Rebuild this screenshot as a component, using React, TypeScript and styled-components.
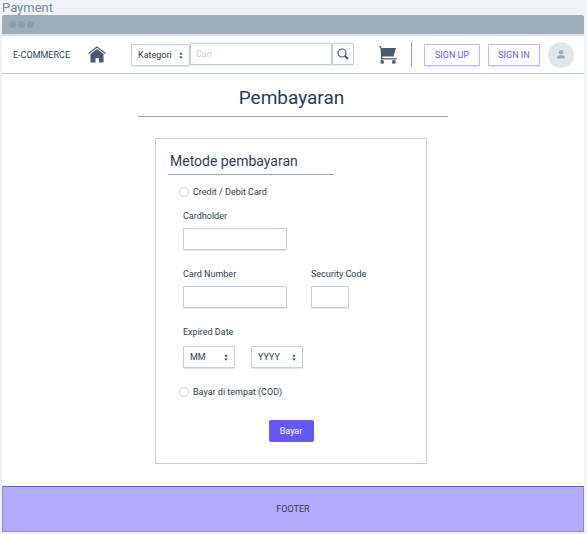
import React from "react";
import styled, { createGlobalStyle, css } from "styled-components";

const c = {
  ink: "#2c3e50",
  slate: "#475c6e",
  line: "#c1cdd8",
  rule: "#92a9bf",
  accent: "#6558f5",
};

const GlobalStyle = createGlobalStyle`
  *, *::before, *::after { box-sizing: border-box; }
  body { margin: 0; background: #eff3f6; }
  body, button, input, select {
    font-family: Roboto, "Liberation Sans", sans-serif;
    font-size: 9px;
    line-height: 12px;
    color: ${c.ink};
  }
`;

const Screen = styled.div`
  display: flex;
  flex-direction: column;
  min-height: 100vh;
  padding: 0 3px 2px 2px;
`;

const ScreenName = styled.div`
  height: 15px;
  font-size: 13px;
  line-height: 16px;
  color: #748b9e;
`;

const Browser = styled.div`
  flex: 1;
  display: flex;
  flex-direction: column;
  background: #fff;
  border-radius: 2px 2px 0 0;
`;

const TitleBar = styled.div`
  display: flex;
  align-items: center;
  gap: 2px;
  height: 21px;
  padding-left: 7px;
  background: #9eadb9;
  border-bottom: 2px solid #dae1e8;
  border-radius: 2px 2px 0 0;
`;

const Dot = styled.span`
  width: 7px;
  height: 7px;
  border-radius: 50%;
  background: #8d9dac;
`;

const Nav = styled.nav`
  display: flex;
  align-items: center;
  height: 38px;
  padding: 0 10px 0 11px;
  border-bottom: 1px solid ${c.line};
`;

const Brand = styled.a`
  color: ${c.ink};
  text-decoration: none;
  white-space: nowrap;
`;

const IconLink = styled.a`
  display: flex;
  color: ${c.slate};
`;

const HomeLink = styled(IconLink)`
  margin: 0 25px 0 18px;
`;

const CartLink = styled(IconLink)`
  margin: 0 14px 0 25px;
`;

const Search = styled.form`
  flex: 1;
  display: flex;
  min-width: 0;
`;

const fieldBox = css`
  height: 22px;
  background: #fff;
  border: 1px solid ${c.line};
  border-radius: 1px;
  box-shadow: 0 1px 0 #e6ebf0;
`;

const SelectBox = styled.span<{ $width: number; $drop?: boolean }>`
  display: grid;
  align-items: center;
  flex: none;
  width: ${(p) => p.$width}px;
  margin-top: ${(p) => (p.$drop ? "1px" : "0")};

  > * { grid-area: 1 / 1; }
  > svg { justify-self: end; margin-right: 7px; pointer-events: none; }
`;

const NativeSelect = styled.select`
  ${fieldBox}
  width: 100%;
  padding: 0 14px 0 6px;
  appearance: none;
`;

const SearchInput = styled.input`
  ${fieldBox}
  flex: 1;
  min-width: 0;
  padding: 0 5px;
  &::placeholder { color: #c6d0d9; opacity: 1; }
`;

const SearchButton = styled.button`
  ${fieldBox}
  display: grid;
  place-items: center;
  width: 22px;
  padding: 0;
  color: ${c.slate};
`;

const Divider = styled.span`
  width: 1px;
  height: 25px;
  margin-right: 12px;
  background: #8fa0ae;
`;

const AuthButton = styled.button<{ $width: number }>`
  flex: none;
  width: ${(p) => p.$width}px;
  height: 22px;
  margin-right: 8px;
  padding: 0;
  color: ${c.accent};
  background: #fff;
  border: 1px solid #bcb5fb;
  border-radius: 1px;
  box-shadow: 0 1px 0 #e5e2fd;
`;

const Avatar = styled.a`
  flex: none;
  display: grid;
  place-items: center;
  width: 26px;
  height: 26px;
  border-radius: 50%;
  background: #dfe6ee;
  color: #9eadba;
`;

const Main = styled.main`
  flex: 1;
  width: 100%;
  max-width: 310px;
  margin: 0 auto;
  padding-bottom: 22px;
`;

const Title = styled.h1`
  margin: 0 0 21px;
  padding: 12px 3px 6px 0;
  border-bottom: 1px solid ${c.rule};
  font-size: 19px;
  line-height: 24px;
  font-weight: 400;
  text-align: center;
`;

const Card = styled.form`
  display: flex;
  flex-direction: column;
  align-items: flex-start;
  margin: 0 21px 0 17px;
  padding: 12px 12px 21px;
  border: 1px solid ${c.line};
`;

const CardTitle = styled.h2`
  width: 166px;
  margin: 0 0 11px;
  padding: 0 2px 3px;
  border-bottom: 1px solid ${c.rule};
  font-size: 14px;
  line-height: 20px;
  font-weight: 400;
  white-space: nowrap;
`;

const Option = styled.label`
  display: flex;
  align-items: center;
  gap: 4px;
  margin-left: 11px;
`;

const Radio = styled.input`
  appearance: none;
  width: 10px;
  height: 10px;
  margin: 0;
  border: 1px solid ${c.line};
  border-radius: 50%;
  background: #fff;
  &:checked { background: ${c.accent}; box-shadow: inset 0 0 0 2px #fff; }
`;

const Details = styled.div`
  display: flex;
  flex-direction: column;
  gap: 18px;
  margin: 12px 0 18px 15px;
`;

const FieldRow = styled.div`
  display: flex;
  gap: 24px;
`;

const Field = styled.label`
  display: flex;
  flex-direction: column;
  gap: 6px;
  white-space: nowrap;
`;

const TextInput = styled.input<{ $width: number }>`
  ${fieldBox}
  width: ${(p) => p.$width}px;
  padding: 0 6px;
`;

const DateGroup = styled.fieldset`
  margin: 0;
  padding: 0;
  border: 0;
`;

const Legend = styled.legend`
  margin-bottom: 8px;
  padding: 0;
`;

const DateRow = styled.div`
  display: flex;
  gap: 16px;
`;

const PayButton = styled.button`
  align-self: center;
  width: 45px;
  height: 22px;
  margin-top: 22px;
  padding: 0;
  color: #fff;
  background: ${c.accent};
  border: 0;
  border-radius: 2px;
`;

const Footer = styled.footer`
  display: grid;
  place-items: center;
  height: 46px;
  background: #b3acfa;
  border: 1px solid #8e84f5;
  border-top-color: ${c.accent};
`;

const Arrows = () => (
  <svg width="4" height="7" viewBox="0 0 4 7" fill={c.ink} aria-hidden="true">
    <path d="M2 .3 3.700 2.400H.3zM.3 4.600h3.400L2 6.700z" />
  </svg>
);

const HomeIcon = () => (
  <svg width="18" height="17" viewBox="0 0 18 17" aria-hidden="true">
    <path d="M.5 7.500 9 1l8.500 6.500" fill="none" stroke="currentColor" strokeWidth="1.200" />
    <path d="M9 3 15.500 8v8.500H11v-4.200H7.500v4.200H2.500V8z" fill="currentColor" />
  </svg>
);

const CartIcon = () => (
  <svg width="18" height="18" viewBox="0 0 18 18" fill="currentColor" aria-hidden="true">
    <path d="M0 0h1.500l1 2H17l-2.500 8.500H3.200v1.700H18v1.200H2V10.500L1.600 3z" />
    <circle cx="3.200" cy="15.900" r="1.900" />
    <circle cx="14.800" cy="15.900" r="1.900" />
  </svg>
);

const SearchIcon = () => (
  <svg width="12" height="12" viewBox="0 0 12 12" fill="none" stroke="currentColor" aria-hidden="true">
    <circle cx="5" cy="5" r="4" strokeWidth="1.200" />
    <path d="m8 8 3 3" strokeWidth="2.200" />
  </svg>
);

const PersonIcon = () => (
  <svg width="8" height="9" viewBox="0 0 8 9" fill="currentColor" aria-hidden="true">
    <circle cx="4" cy="2.200" r="2.200" />
    <path d="M0 8.500V7.300C0 5.800 2 5.200 4 5.200s4 .6 4 2.100v1.200z" />
  </svg>
);

interface SelectProps {
  label: string;
  width: number;
  options: string[];
  drop?: boolean;
}

const Select = ({ label, width, options, drop }: SelectProps) => (
  <SelectBox $width={width} $drop={drop}>
    <NativeSelect aria-label={label}>
      {options.map((o) => (
        <option key={o}>{o}</option>
      ))}
    </NativeSelect>
    <Arrows />
  </SelectBox>
);

const stay = (e: React.FormEvent) => e.preventDefault();

export default function App() {
  return (
    <>
      <GlobalStyle />
      <Screen>
        <ScreenName>Payment</ScreenName>
        <Browser>
          <TitleBar>
            <Dot />
            <Dot />
            <Dot />
          </TitleBar>
          <Nav>
            <Brand href="#">E-COMMERCE</Brand>
            <HomeLink href="#" aria-label="Home">
              <HomeIcon />
            </HomeLink>
            <Search onSubmit={stay}>
              <Select label="Kategori" width={59} options={["Kategori"]} drop />
              <SearchInput type="search" aria-label="Cari" placeholder="Cari" />
              <SearchButton type="submit" aria-label="Cari">
                <SearchIcon />
              </SearchButton>
            </Search>
            <CartLink href="#" aria-label="Cart">
              <CartIcon />
            </CartLink>
            <Divider />
            <AuthButton type="button" $width={56}>SIGN UP</AuthButton>
            <AuthButton type="button" $width={52}>SIGN IN</AuthButton>
            <Avatar href="#" aria-label="Profile">
              <PersonIcon />
            </Avatar>
          </Nav>
          <Main>
            <Title>Pembayaran</Title>
            <Card onSubmit={stay}>
              <CardTitle>Metode pembayaran</CardTitle>
              <Option>
                <Radio type="radio" name="method" value="card" />
                Credit / Debit Card
              </Option>
              <Details>
                <Field>
                  Cardholder
                  <TextInput type="text" $width={104} />
                </Field>
                <FieldRow>
                  <Field>
                    Card Number
                    <TextInput type="text" inputMode="numeric" $width={104} />
                  </Field>
                  <Field>
                    Security Code
                    <TextInput type="text" inputMode="numeric" $width={38} />
                  </Field>
                </FieldRow>
                <DateGroup>
                  <Legend>Expired Date</Legend>
                  <DateRow>
                    <Select label="Month" width={52} options={["MM"]} />
                    <Select label="Year" width={52} options={["YYYY"]} />
                  </DateRow>
                </DateGroup>
              </Details>
              <Option>
                <Radio type="radio" name="method" value="cod" />
                Bayar di tempat (COD)
              </Option>
              <PayButton type="submit">Bayar</PayButton>
            </Card>
          </Main>
          <Footer>FOOTER</Footer>
        </Browser>
      </Screen>
    </>
  );
}
